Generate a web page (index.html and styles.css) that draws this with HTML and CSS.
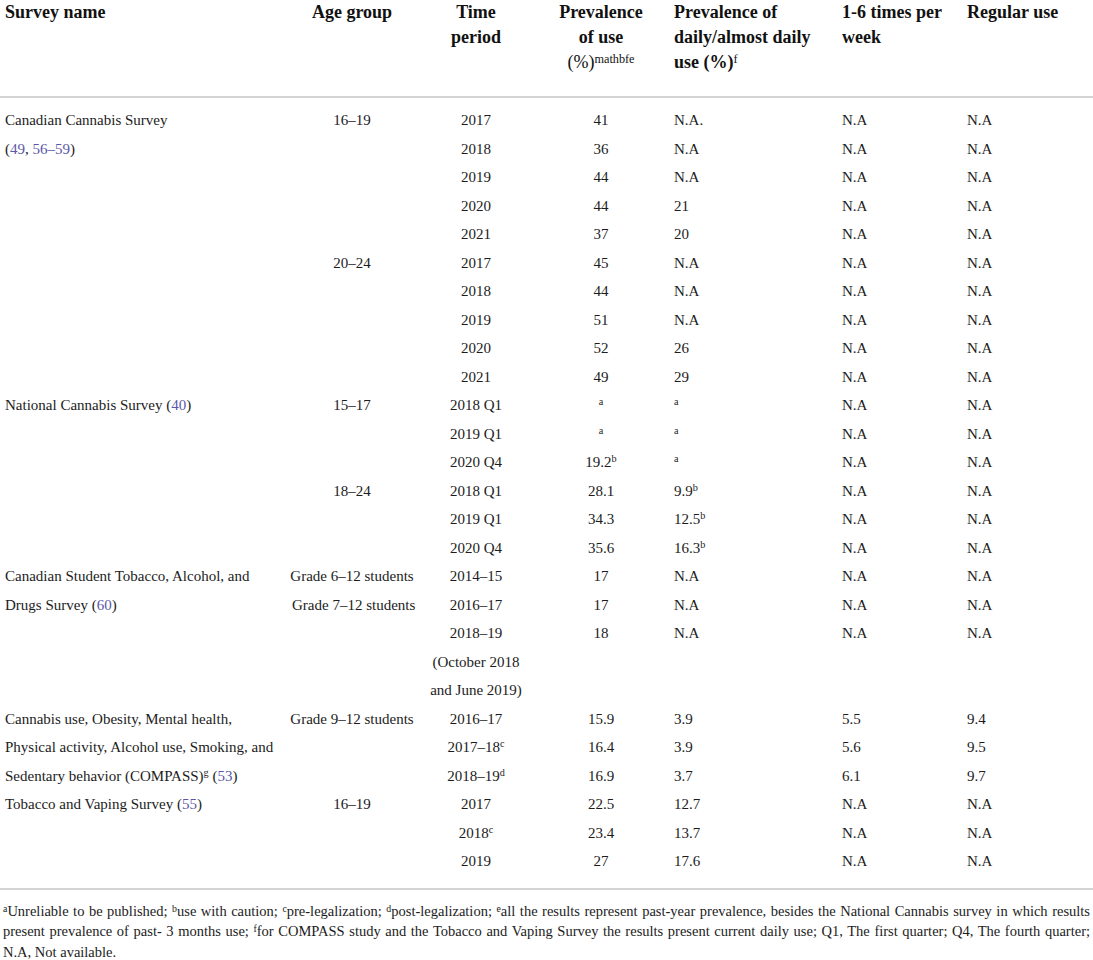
FILE: index.html
```html
<!DOCTYPE html>
<html lang="en">
<head>
<meta charset="utf-8">
<title>Cannabis use prevalence table</title>
<link rel="stylesheet" href="styles.css">
</head>
<body>
<div class="wrap">
<table class="data">
  <colgroup>
    <col class="c1"><col class="c2"><col class="c3"><col class="c4"><col class="c5"><col class="c6"><col class="c7">
  </colgroup>
  <thead>
    <tr>
      <th class="l">Survey name</th>
      <th class="c">Age group</th>
      <th class="c">Time<br>period</th>
      <th class="c">Prevalence<br>of use<br><span class="reg">(%)<sup>mathbfe</sup></span></th>
      <th class="l">Prevalence of<br>daily/almost daily<br>use (%)<sup class="reg">f</sup></th>
      <th class="l">1-6 times per<br>week</th>
      <th class="l">Regular use</th>
    </tr>
  </thead>
  <tbody>
    <tr class="first">
      <td class="l" rowspan="10">Canadian Cannabis Survey<br>(<a>49</a>, <a>56–59</a>)</td>
      <td class="c" rowspan="5">16–19</td>
      <td class="c">2017</td><td class="c">41</td><td>N.A.</td><td>N.A</td><td>N.A</td>
    </tr>
    <tr><td class="c">2018</td><td class="c">36</td><td>N.A</td><td>N.A</td><td>N.A</td></tr>
    <tr><td class="c">2019</td><td class="c">44</td><td>N.A</td><td>N.A</td><td>N.A</td></tr>
    <tr><td class="c">2020</td><td class="c">44</td><td>21</td><td>N.A</td><td>N.A</td></tr>
    <tr><td class="c">2021</td><td class="c">37</td><td>20</td><td>N.A</td><td>N.A</td></tr>
    <tr>
      <td class="c" rowspan="5">20–24</td>
      <td class="c">2017</td><td class="c">45</td><td>N.A</td><td>N.A</td><td>N.A</td>
    </tr>
    <tr><td class="c">2018</td><td class="c">44</td><td>N.A</td><td>N.A</td><td>N.A</td></tr>
    <tr><td class="c">2019</td><td class="c">51</td><td>N.A</td><td>N.A</td><td>N.A</td></tr>
    <tr><td class="c">2020</td><td class="c">52</td><td>26</td><td>N.A</td><td>N.A</td></tr>
    <tr><td class="c">2021</td><td class="c">49</td><td>29</td><td>N.A</td><td>N.A</td></tr>

    <tr>
      <td class="l" rowspan="6">National Cannabis Survey (<a>40</a>)</td>
      <td class="c" rowspan="3">15–17</td>
      <td class="c">2018 Q1</td><td class="c"><sup>a</sup></td><td><sup>a</sup></td><td>N.A</td><td>N.A</td>
    </tr>
    <tr><td class="c">2019 Q1</td><td class="c"><sup>a</sup></td><td><sup>a</sup></td><td>N.A</td><td>N.A</td></tr>
    <tr><td class="c">2020 Q4</td><td class="c">19.2<sup>b</sup></td><td><sup>a</sup></td><td>N.A</td><td>N.A</td></tr>
    <tr>
      <td class="c" rowspan="3">18–24</td>
      <td class="c">2018 Q1</td><td class="c">28.1</td><td>9.9<sup>b</sup></td><td>N.A</td><td>N.A</td>
    </tr>
    <tr><td class="c">2019 Q1</td><td class="c">34.3</td><td>12.5<sup>b</sup></td><td>N.A</td><td>N.A</td></tr>
    <tr><td class="c">2020 Q4</td><td class="c">35.6</td><td>16.3<sup>b</sup></td><td>N.A</td><td>N.A</td></tr>

    <tr>
      <td class="l" rowspan="3">Canadian Student Tobacco, Alcohol, and<br>Drugs Survey (<a>60</a>)</td>
      <td class="c">Grade 6–12 students</td>
      <td class="c">2014–15</td><td class="c">17</td><td>N.A</td><td>N.A</td><td>N.A</td>
    </tr>
    <tr>
      <td class="c">Grade 7–12 students</td>
      <td class="c">2016–17</td><td class="c">17</td><td>N.A</td><td>N.A</td><td>N.A</td>
    </tr>
    <tr>
      <td class="c"></td>
      <td class="c">2018–19<br>(October 2018<br>and June 2019)</td><td class="c">18</td><td>N.A</td><td>N.A</td><td>N.A</td>
    </tr>

    <tr>
      <td class="l" rowspan="3">Cannabis use, Obesity, Mental health,<br>Physical activity, Alcohol use, Smoking, and<br>Sedentary behavior (COMPASS)<sup>g</sup> (<a>53</a>)</td>
      <td class="c" rowspan="3">Grade 9–12 students</td>
      <td class="c">2016–17</td><td class="c">15.9</td><td>3.9</td><td>5.5</td><td>9.4</td>
    </tr>
    <tr><td class="c">2017–18<sup>c</sup></td><td class="c">16.4</td><td>3.9</td><td>5.6</td><td>9.5</td></tr>
    <tr><td class="c">2018–19<sup>d</sup></td><td class="c">16.9</td><td>3.7</td><td>6.1</td><td>9.7</td></tr>

    <tr>
      <td class="l" rowspan="3">Tobacco and Vaping Survey (<a>55</a>)</td>
      <td class="c" rowspan="3">16–19</td>
      <td class="c">2017</td><td class="c">22.5</td><td>12.7</td><td>N.A</td><td>N.A</td>
    </tr>
    <tr><td class="c">2018<sup>c</sup></td><td class="c">23.4</td><td>13.7</td><td>N.A</td><td>N.A</td></tr>
    <tr class="last"><td class="c">2019</td><td class="c">27</td><td>17.6</td><td>N.A</td><td>N.A</td></tr>
  </tbody>
</table>
<div class="notes">
  <span class="just"><sup>a</sup>Unreliable to be published; <sup>b</sup>use with caution; <sup>c</sup>pre-legalization; <sup>d</sup>post-legalization; <sup>e</sup>all the results represent past-year prevalence, besides the National Cannabis survey in which results present prevalence of past- 3 months use; <sup>f</sup>for COMPASS study and the Tobacco and Vaping Survey the results present current daily use; Q1, The first quarter; Q4, The fourth quarter;</span>
  <span class="tail">N.A, Not available.</span>
</div>
</div>
</body>
</html>
```

FILE: styles.css
```css
html, body {
  margin: 0;
  padding: 0;
  background: #ffffff;
}
body {
  font-family: "Liberation Serif", "Times New Roman", serif;
  color: #1c1c1c;
}
.wrap {
  width: 1093px;
}
.data {
  width: 1093px;
  border-collapse: collapse;
  table-layout: fixed;
}
.c1 { width: 286px; }
.c2 { width: 132px; }
.c3 { width: 116px; }
.c4 { width: 134px; }
.c5 { width: 168px; }
.c6 { width: 125px; }
.c7 { width: 132px; }

.data th {
  font-size: 18px;
  font-weight: bold;
  line-height: 25px;
  vertical-align: top;
  padding: 0 6px 21px 6px;
  color: #111;
  border-bottom: 2px solid #d4d4d4;
}
.data th:first-child { padding-left: 5px; }
.data td {
  font-size: 15px;
  line-height: 28.5px;
  vertical-align: top;
  padding: 0 6px;
  white-space: nowrap;
}
.data td:nth-child(2).c, .data th:nth-child(2) { padding-left: 2px; padding-right: 2px; }
.data td.l { padding-left: 5px; }
.data tr.first td { padding-top: 8px; }
.data tr.last td { padding-bottom: 12px; }
.data tbody { border-bottom: 2px solid #d4d4d4; }
.l { text-align: left; }
.c { text-align: center; }
.data th.l { text-align: left; }
.data th.c { text-align: center; }
.reg { font-weight: normal; }
sup {
  font-size: 0.68em;
  line-height: 0;
  vertical-align: 0.45em;
}
a {
  color: #5b57a8;
  text-decoration: none;
}
.notes {
  margin: 11px 0 0 0;
  padding: 0 3px;
  font-size: 14.5px;
  line-height: 20.5px;
  color: #1c1c1c;
}
.just {
  display: block;
  text-align: justify;
  text-align-last: justify;
}
.tail {
  display: block;
}
```
